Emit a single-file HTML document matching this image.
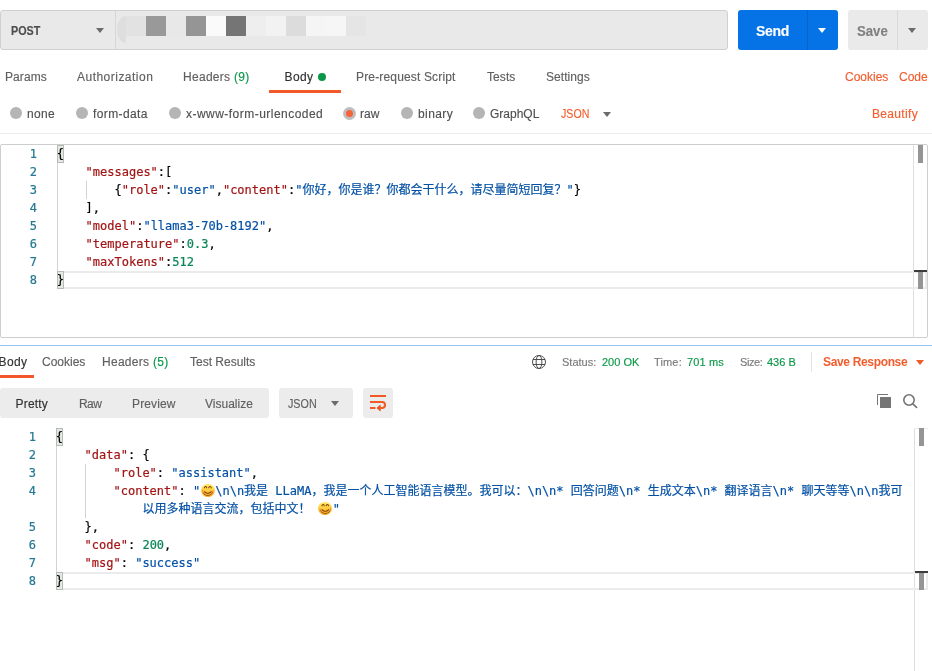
<!DOCTYPE html>
<html lang="zh">
<head>
<meta charset="utf-8">
<title>Postman</title>
<style>
html,body{margin:0;padding:0;background:#fff;}
body{width:932px;height:671px;position:relative;overflow:hidden;font-family:"Liberation Sans","Noto Sans CJK SC",sans-serif;font-size:12px;color:#606060;}
#root{position:absolute;left:0;top:0;width:932px;height:671px;overflow:hidden;will-change:transform;}
.abs{position:absolute;}
.t{position:absolute;white-space:nowrap;line-height:16px;height:16px;-webkit-text-stroke:0.15px;}
/* top bar */
#urlbox{left:0;top:10px;width:726px;height:38px;border:1px solid #d0d0d0;border-radius:3px;background:#e9e9e9;}
#urldiv{left:115px;top:11px;width:1px;height:38px;background:#d6d6d6;}
#method{left:11px;top:23px;font-weight:bold;font-size:12.5px;transform:scaleX(0.86);transform-origin:0 50%;color:#4d4d4d;}
.tri{position:absolute;width:0;height:0;border-left:4px solid transparent;border-right:4px solid transparent;border-top:5px solid #6b6b6b;}
.px{position:absolute;top:16px;width:20px;height:20px;}
#send{left:738px;top:10px;width:100px;height:40px;border-radius:3px;background:#0572e6;}
#senddiv{left:807px;top:10px;width:1px;height:40px;background:#0565cc;}
#sendt{left:756px;top:23px;font-weight:bold;font-size:14px;letter-spacing:-0.3px;color:#fff;}
#save{left:848px;top:10px;width:80px;height:40px;border-radius:3px;background:#eaeaea;}
#savediv{left:897px;top:10px;width:1px;height:40px;background:#d9d9d9;}
#savet{left:857px;top:23px;font-weight:bold;font-size:14px;transform:scaleX(0.94);transform-origin:0 50%;color:#808080;}
/* tabs */
.tab{top:69px;}
.green{color:#0a9848;}
.orange{color:#f25d2d !important;}
.radio{position:absolute;width:12px;height:12px;border-radius:50%;background:#b5b5b5;top:107px;}
.rl{top:106px;color:#505050;}
.hl{position:absolute;height:1px;}
/* editor */
.code{position:absolute;font-family:"DejaVu Sans Mono","Liberation Mono","Noto Sans CJK SC",monospace;font-size:12px;line-height:18px;height:18px;white-space:pre;color:#000;letter-spacing:0;-webkit-text-stroke:0.2px;}
.ln{position:absolute;font-family:"DejaVu Sans Mono","Liberation Mono",monospace;font-size:12px;line-height:18px;height:18px;width:37px;left:0;text-align:right;color:#237893;-webkit-text-stroke:0.2px;}
.k{color:#a31515;}
.s{color:#0451a5;}
.n{color:#098658;}
.guide{position:absolute;width:1px;background:#d3d3d3;}
.bm{position:absolute;width:5px;height:16px;border:1px solid #b9b9b9;background:#e2ebe2;}
.cl{position:absolute;height:14px;border-top:2px solid #ebebeb;border-bottom:2px solid #ebebeb;}
.sm{font-size:11px;}
.sm:not(.green){color:#7a7a7a;}
.emo{display:inline-block;position:relative;width:15px;height:18px;vertical-align:top;-webkit-text-stroke:0;}
.emo::before{content:"";position:absolute;left:0.8px;top:1.6px;width:13.6px;height:13.6px;border-radius:50%;background:radial-gradient(circle at 22% 62%,rgba(255,120,90,.55) 0,rgba(255,120,90,0) 2.6px),radial-gradient(circle at 78% 62%,rgba(255,120,90,.55) 0,rgba(255,120,90,0) 2.6px),linear-gradient(180deg,#ffe868 0%,#ffd23f 45%,#f6a623 100%);}
.eg{position:absolute;left:-0.2px;top:1.2px;width:16px;height:15px;font-family:"DejaVu Sans",sans-serif;font-size:15px;line-height:15px;color:#7a3d05;clip-path:circle(5.3px at 7.8px 7.2px);}
</style>
</head>
<body>
<div id="root">
<!-- TOP BAR -->
<div class="abs" id="urlbox"></div>
<div class="abs" id="urldiv"></div>
<div class="t" id="method">POST</div>
<div class="tri" style="left:96px;top:28px;"></div>

<div class="abs" id="send"></div><div class="abs" id="senddiv"></div>
<div class="t" id="sendt">Send</div>
<div class="tri" style="left:818px;top:28px;border-top-color:#fff;"></div>
<div class="abs" id="save"></div><div class="abs" id="savediv"></div>
<div class="t" id="savet">Save</div>
<div class="tri" style="left:908px;top:28px;border-top-color:#6b6b6b;"></div>
<!-- mosaic url -->
<div class="abs" style="left:117px;top:16px;width:9px;height:26.5px;background:#dedede;border-radius:9px 0 0 9px / 13px 0 0 13px;"></div>
<div class="px" style="left:126px;background:#e2e2e2;"></div>
<div class="px" style="left:146px;background:#999999;"></div>
<div class="px" style="left:166px;background:#e8e8e8;"></div>
<div class="px" style="left:186px;background:#959595;"></div>
<div class="px" style="left:206px;background:#fafafa;"></div>
<div class="px" style="left:226px;background:#757575;"></div>
<div class="px" style="left:246px;background:#eeeeee;"></div>
<div class="px" style="left:266px;background:#f2f2f2;"></div>
<div class="px" style="left:286px;background:#dcdcdc;"></div>
<div class="px" style="left:306px;background:#f5f5f5;"></div>
<div class="px" style="left:326px;background:#f6f6f6;"></div>
<div class="px" style="left:346px;background:#e5e5e5;"></div>

<!-- REQUEST TABS -->
<div class="t tab" style="left:5px;letter-spacing:0.08px;">Params</div>
<div class="t tab" style="left:77px;letter-spacing:0.48px;">Authorization</div>
<div class="t tab" style="left:183px;letter-spacing:0.29px;">Headers <span class="green">(9)</span></div>
<div class="t tab" style="left:284.5px;color:#303030;letter-spacing:0.4px;">Body</div>
<div class="abs" style="left:318px;top:73px;width:8px;height:8px;border-radius:50%;background:#0a9848;"></div>
<div class="abs" style="left:269px;top:90px;width:72px;height:3px;background:#f3582a;"></div>
<div class="t tab" style="left:356px;letter-spacing:0.16px;">Pre-request Script</div>
<div class="t tab" style="left:487px;letter-spacing:0.08px;">Tests</div>
<div class="t tab" style="left:546px;letter-spacing:0.06px;">Settings</div>
<div class="t tab orange" style="left:845px;">Cookies</div>
<div class="t tab orange" style="left:899px;">Code</div>

<!-- BODY TYPE ROW -->
<div class="radio" style="left:10px;"></div><div class="t rl" style="left:27px;letter-spacing:0.3px;">none</div>
<div class="radio" style="left:76px;"></div><div class="t rl" style="left:93px;letter-spacing:0.39px;">form-data</div>
<div class="radio" style="left:169px;"></div><div class="t rl" style="left:186px;letter-spacing:0.47px;">x-www-form-urlencoded</div>
<div class="radio" style="left:343px;top:107px;width:13px;height:13px;background:#bebebe;"></div><div class="abs" style="left:346px;top:110px;width:7px;height:7px;border-radius:50%;background:#f6633a;"></div><div class="t rl" style="left:360px;">raw</div>
<div class="radio" style="left:401px;"></div><div class="t rl" style="left:418px;letter-spacing:0.42px;">binary</div>
<div class="radio" style="left:473px;"></div><div class="t rl" style="left:490px;">GraphQL</div>
<div class="t rl orange" style="left:561px;transform:scaleX(0.885);transform-origin:0 50%;">JSON</div>
<div class="tri" style="left:603px;top:112px;"></div>
<div class="t rl orange" style="left:872px;letter-spacing:0.33px;">Beautify</div>
<div class="hl" style="left:0;top:133px;width:932px;background:#ececec;"></div>

<!-- REQUEST EDITOR -->
<div class="abs" style="left:0;top:144px;width:926px;height:192px;border:1px solid #cecece;border-radius:2px;"></div>
<div class="abs" style="left:913px;top:145px;width:1px;height:192px;background:#dedede;"></div>
<div class="abs" style="left:918px;top:145px;width:5px;height:18px;background:#959595;"></div>
<div class="cl" style="left:57px;top:271px;width:868px;border-left:0;border-right:2px solid #ebebeb;"></div>
<div class="abs" style="left:914px;top:270px;width:13px;height:2px;background:#3c3c3c;"></div>
<div class="abs" style="left:918px;top:272px;width:5px;height:17px;background:#959595;"></div>
<div class="guide" style="left:57px;top:145px;height:144px;"></div>
<div class="guide" style="left:86px;top:181px;height:18px;"></div>
<div class="bm" style="left:57px;top:145px;"></div>
<div class="bm" style="left:57px;top:271px;"></div>
<div class="ln" style="top:145px;">1</div><div class="code" style="left:56.7px;top:145px;">{</div>
<div class="ln" style="top:163px;">2</div><div class="code" style="left:56.7px;top:163px;">    <span class="k">"messages"</span>:[</div>
<div class="ln" style="top:181px;">3</div><div class="code" style="left:56.7px;top:181px;">        {<span class="k">"role"</span>:<span class="s">"user"</span>,<span class="k">"content"</span>:<span class="s">"你好，你是谁？你都会干什么，请尽量简短回复？"</span>}</div>
<div class="ln" style="top:199px;">4</div><div class="code" style="left:56.7px;top:199px;">    ],</div>
<div class="ln" style="top:217px;">5</div><div class="code" style="left:56.7px;top:217px;">    <span class="k">"model"</span>:<span class="s">"llama3-70b-8192"</span>,</div>
<div class="ln" style="top:235px;">6</div><div class="code" style="left:56.7px;top:235px;">    <span class="k">"temperature"</span>:<span class="n">0.3</span>,</div>
<div class="ln" style="top:253px;">7</div><div class="code" style="left:56.7px;top:253px;">    <span class="k">"maxTokens"</span>:<span class="n">512</span></div>
<div class="ln" style="top:271px;">8</div><div class="code" style="left:56.7px;top:271px;">}</div>

<!-- RESPONSE HEADER -->
<div class="hl" style="left:0;top:345px;width:932px;background:#9ac5ef;"></div>
<div class="t" style="left:-1.5px;top:354px;color:#303030;letter-spacing:0.4px;">Body</div>
<div class="abs" style="left:0;top:375px;width:34px;height:3px;background:#f3582a;"></div>
<div class="t" style="left:42px;top:354px;">Cookies</div>
<div class="t" style="left:102px;top:354px;letter-spacing:0.28px;">Headers <span class="green">(5)</span></div>
<div class="t" style="left:190px;top:354px;">Test Results</div>
<svg class="abs" style="left:531px;top:354px;" width="16" height="16" viewBox="0 0 16 16" fill="none" stroke="#4d4d4d" stroke-width="1"><circle cx="8" cy="8" r="6.5"/><ellipse cx="8" cy="8" rx="2.9" ry="6.5"/><path d="M2 5.5h12M2 10.5h12"/></svg>
<div class="t sm" style="left:562px;top:354px;">Status:</div>
<div class="t sm green" style="left:602px;top:354px;">200 OK</div>
<div class="t sm" style="left:654px;top:354px;letter-spacing:0.15px;">Time:</div>
<div class="t sm green" style="left:687px;top:354px;letter-spacing:0.12px;">701 ms</div>
<div class="t sm" style="left:740px;top:354px;letter-spacing:-0.42px;">Size:</div>
<div class="t sm green" style="left:767px;top:354px;">436 B</div>
<div class="abs" style="left:811px;top:352px;width:1px;height:20px;background:#e4e4e4;"></div>
<div class="t orange" style="left:823px;top:354px;font-weight:bold;letter-spacing:-0.34px;-webkit-text-stroke:0;">Save Response</div>
<div class="tri" style="left:916px;top:360px;border-top-color:#f15a24;"></div>

<!-- RESPONSE TOOLBAR -->
<div class="abs" style="left:0;top:388px;width:269px;height:30px;background:#ececec;border-radius:3px;"></div>
<div class="t" style="left:15.5px;top:396px;color:#303030;letter-spacing:0.2px;">Pretty</div>
<div class="t" style="left:79px;top:396px;letter-spacing:-0.6px;">Raw</div>
<div class="t" style="left:132px;top:396px;letter-spacing:0.13px;">Preview</div>
<div class="t" style="left:205px;top:396px;">Visualize</div>
<div class="abs" style="left:279px;top:388px;width:74px;height:30px;background:#ececec;border-radius:3px;"></div>
<div class="t" style="left:288px;top:396px;transform:scaleX(0.895);transform-origin:0 50%;">JSON</div>
<div class="tri" style="left:331px;top:401px;"></div>
<div class="abs" style="left:363px;top:388px;width:30px;height:30px;background:#ececec;border-radius:3px;"></div>
<svg class="abs" style="left:363px;top:388px;" width="30" height="30" viewBox="0 0 30 30" fill="none" stroke="#f15a24" stroke-width="2"><path d="M7 8h16M7 14h12a3 3 0 0 1 0 6H16M7 20h5.5"/><path d="M17.2 17.2L14 20l3.2 2.8z" fill="#f15a24" stroke-width="1" stroke-linejoin="round"/></svg>
<svg class="abs" style="left:876px;top:393px;" width="16" height="16" viewBox="0 0 16 16"><path d="M1.5 12V1.5H12" fill="none" stroke="#757575" stroke-width="1"/><rect x="4" y="4" width="11" height="11" fill="#757575"/></svg>
<svg class="abs" style="left:902px;top:393px;" width="16" height="16" viewBox="0 0 16 16" fill="none" stroke="#757575" stroke-width="1.6"><circle cx="7" cy="7" r="5.2"/><path d="M10.8 10.8L14.6 14.4" stroke-linecap="round"/></svg>

<!-- RESPONSE EDITOR -->
<div class="abs" style="left:914px;top:428px;width:1px;height:243px;background:#dedede;"></div>
<div class="abs" style="left:914px;top:428px;width:14px;height:1px;background:#ececec;"></div>
<div class="abs" style="left:919px;top:428px;width:5px;height:18px;background:#959595;"></div>
<div class="cl" style="left:56px;top:572px;width:870px;border-right:2px solid #ebebeb;"></div>
<div class="abs" style="left:915px;top:571px;width:13px;height:2px;background:#3c3c3c;"></div>
<div class="abs" style="left:919px;top:573px;width:5px;height:17px;background:#959595;"></div>
<div class="guide" style="left:56px;top:428px;height:162px;"></div>
<div class="guide" style="left:85px;top:464px;height:54px;"></div>
<div class="bm" style="left:56px;top:428px;"></div>
<div class="bm" style="left:56px;top:572px;"></div>
<div class="ln" style="width:36px;top:428px;">1</div><div class="code" style="left:55.7px;top:428px;">{</div>
<div class="ln" style="width:36px;top:446px;">2</div><div class="code" style="left:55.7px;top:446px;">    <span class="k">"data"</span>: {</div>
<div class="ln" style="width:36px;top:464px;">3</div><div class="code" style="left:55.7px;top:464px;">        <span class="k">"role"</span>: <span class="s">"assistant"</span>,</div>
<div class="ln" style="width:36px;top:482px;">4</div><div class="code" style="left:55.7px;top:482px;">        <span class="k">"content"</span>: <span class="s">"<span class="emo"><span class="eg">😊</span></span>\n\n我是 LLaMA，我是一个人工智能语言模型。我可以：\n\n* 回答问题\n* 生成文本\n* 翻译语言\n* 聊天等等\n\n我可</span></div>
<div class="code" style="left:55.7px;top:500px;">            <span class="s">以用多种语言交流，包括中文！ <span class="emo"><span class="eg">😊</span></span>"</span></div>
<div class="ln" style="width:36px;top:518px;">5</div><div class="code" style="left:55.7px;top:518px;">    },</div>
<div class="ln" style="width:36px;top:536px;">6</div><div class="code" style="left:55.7px;top:536px;">    <span class="k">"code"</span>: <span class="n">200</span>,</div>
<div class="ln" style="width:36px;top:554px;">7</div><div class="code" style="left:55.7px;top:554px;">    <span class="k">"msg"</span>: <span class="s">"success"</span></div>
<div class="ln" style="width:36px;top:572px;">8</div><div class="code" style="left:55.7px;top:572px;">}</div>

</div>
</body>
</html>
